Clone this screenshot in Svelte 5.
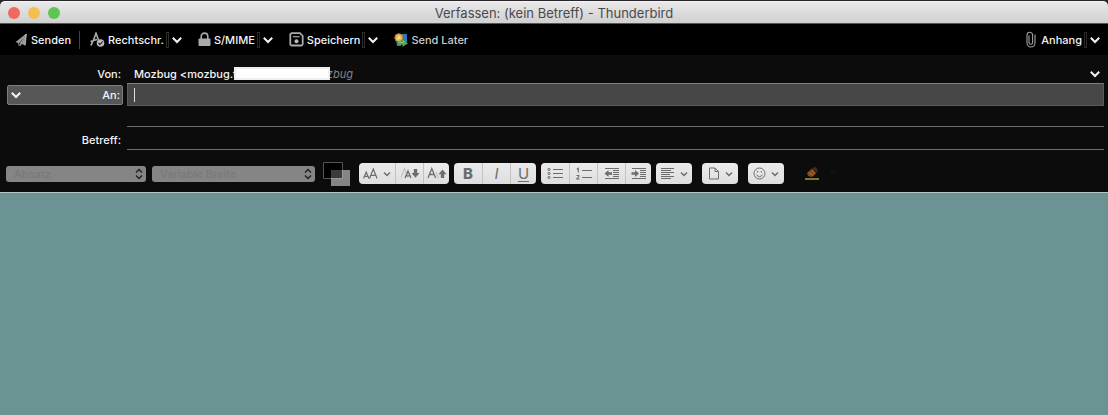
<!--
  Compose window: title bar, main toolbar, address rows, format bar and body.
-->
<script lang="ts">
	let to = $state('');
	let extra = $state('');
	let subject = $state('');
	let body = $state('');
</script>

{#snippet chevron()}
	<svg class="chevron" width="10" height="8" viewBox="0 0 10 8" aria-hidden="true">
		<path d="M.8 1.8 5 6 9.2 1.8" fill="none" stroke="currentColor" stroke-width="2" />
	</svg>
{/snippet}

{#snippet smallChevron()}
	<svg width="8" height="6" viewBox="0 0 8 6" aria-hidden="true">
		<path d="M1 1.5 4 4.5 7 1.5" fill="none" stroke="currentColor" stroke-width="1.5" />
	</svg>
{/snippet}

{#snippet drop(label: string)}
	<button type="button" class="drop" aria-label={label}>
		<span class="notch"></span>{@render chevron()}
	</button>
{/snippet}

{#snippet updown()}
	<svg class="updown" width="8" height="12" viewBox="0 0 8 12" aria-hidden="true">
		<path d="M1 4.5 4 1.5 7 4.5M1 7.5 4 10.5 7 7.5" fill="none" stroke="#222" stroke-width="1.5" />
	</svg>
{/snippet}

<div class="window">
	<header class="titlebar">
		<div class="lights">
			<button type="button" class="light close" aria-label="Schließen"></button>
			<button type="button" class="light minimize" aria-label="Minimieren"></button>
			<button type="button" class="light zoom" aria-label="Zoomen"></button>
		</div>
		<h1>Verfassen: (kein Betreff) - Thunderbird</h1>
	</header>

	<div class="toolbar" role="toolbar" aria-label="Verfassen">
		<button type="button" class="tool">
			<svg width="12" height="14" viewBox="0 0 12 14" aria-hidden="true">
				<path d="M11.5.5.5 9l3 1.3zM11.5.5 5 10v3.5l1.8-2.4 3.4 1.4z" fill="#999" />
				<path d="M11 1 3.7 10.1 4.2 13M11.3 1 10.2 12.3" fill="none" stroke="#bbb" stroke-width=".9" />
			</svg>
			Senden
		</button>
		<span class="divider"></span>
		<div class="split">
			<button type="button" class="tool">
				<svg width="15" height="15" viewBox="0 0 15 15" aria-hidden="true">
					<path d="M.8 13.5Q4 8 6 1.2L8.5 8M.5 9.5 7 7.5" fill="none" stroke="#aaa" stroke-width="1.6" />
					<circle cx="10.5" cy="11" r="3.8" fill="#bbb" />
					<path d="M8.5 11 10 12.5 12.7 9.5" fill="none" stroke="#111" stroke-width="1.1" />
				</svg>
				Rechtschr.
			</button>
			{@render drop('Rechtschreibung wählen')}
		</div>
		<div class="split">
			<button type="button" class="tool">
				<svg width="13" height="15" viewBox="0 0 13 15" aria-hidden="true">
					<path d="M3.2 7V4.4a3.3 3.3 0 0 1 6.6 0V7" fill="none" stroke="#aaa" stroke-width="1.6" />
					<rect x=".5" y="6.5" width="12" height="7.5" rx="1" fill="#aaa" />
				</svg>
				S/MIME
			</button>
			{@render drop('S/MIME-Optionen')}
		</div>
		<div class="split">
			<button type="button" class="tool">
				<svg width="15" height="15" viewBox="0 0 15 15" aria-hidden="true">
					<path d="M2.5 1.2H11L13.7 4v8a1.5 1.5 0 0 1-1.5 1.5H2.8A1.5 1.5 0 0 1 1.3 12V2.4z" fill="none" stroke="#aaa" stroke-width="1.8" />
					<path d="M4 4.7h6.5" stroke="#aaa" stroke-width="1.2" />
					<circle cx="7.5" cy="9.3" r="2" fill="#bbb" />
				</svg>
				Speichern
			</button>
			{@render drop('Speichern als')}
		</div>
		<button type="button" class="tool later">
			<svg width="14" height="14" viewBox="0 0 14 14" aria-hidden="true">
				<path d="M5 1h8v8H5z" fill="#2f79bd" />
				<path d="M2 6h5v7H3z" fill="#317ec4" />
				<circle cx="4.8" cy="4.7" r="4" fill="#e2b84e" stroke="#ad792d" />
				<path d="M5 2.5v2.6l-2 1M5 5h1.5" fill="none" stroke="#fff2bb" stroke-width="1" />
				<path d="M4 9h4.5V6.5L14 10.2 8.5 14v-2.2H4z" fill="#4da849" />
				<path d="M5 9.6h4.2V8l2 1.6" fill="none" stroke="#a4d58b" stroke-width=".7" />
			</svg>
			Send Later
		</button>
		<div class="split attach">
			<button type="button" class="tool">
				<svg width="10" height="17" viewBox="0 0 10 17" aria-hidden="true">
					<path d="M3 4.5v7a1.8 1.8 0 0 0 3.6 0V4a2.8 2.8 0 0 0-5.6 0v8a4 4 0 0 0 8 0V3.5" fill="none" stroke="#a0a0a0" stroke-width="1.1" />
				</svg>
				Anhang
			</button>
			{@render drop('Anhang wählen')}
		</div>
	</div>

	<div class="headers">
		<span class="name" id="from-label">Von:</span>
		<button type="button" class="from" aria-labelledby="from-label from-value">
			<span id="from-value">Mozbug &lt;mozbug.t</span><span class="hidden-part"></span><i>zbug</i>
			{@render chevron()}
		</button>

		<button type="button" class="kind">{@render chevron()}<span>An:</span></button>
		<div class="to">
			<span class="caret"></span>
			<input class="field" aria-label="An" bind:value={to} />
		</div>

		<span></span>
		<input class="field line" aria-label="Weiterer Empfänger" bind:value={extra} />

		<label class="name subject" for="subject">Betreff:</label>
		<input id="subject" class="field line" bind:value={subject} />
	</div>

	<div class="format" role="toolbar" aria-label="Formatierung">
		<div class="picker paragraph">
			<select aria-label="Absatzformat" disabled><option>Absatz</option></select>
			{@render updown()}
		</div>
		<div class="picker font">
			<select aria-label="Schriftart" disabled><option>Variable Breite</option></select>
			{@render updown()}
		</div>
		<button type="button" class="colors" aria-label="Textfarbe">
			<svg width="28" height="26" viewBox="0 0 28 26" aria-hidden="true">
				<path d="M8 9h19v16H8z" fill="#858585" />
				<path d="M.5 1.5h19v16H.5z" fill="#000" stroke="#555" />
				<path d="M8 9h11v8H8z" fill="#3b3b3b" />
				<path d="M8 17.5h11.5V9" fill="none" stroke="#999" />
			</svg>
		</button>

		<div class="group">
			<button type="button" class="wide" aria-label="Schriftgröße">
				<svg width="15" height="12" viewBox="0 0 15 12" aria-hidden="true">
					<path d="M.5 10.5 3.2 4l2.7 6.5M1.4 8.4H5M6.5 10.5 10.3 1l3.8 9.5M7.8 7.3h5" fill="none" stroke="currentColor" stroke-width="1.2" />
				</svg>
				{@render smallChevron()}
			</button>
			<button type="button" aria-label="Schrift verkleinern">
				<svg width="20" height="13" viewBox="0 0 20 13" aria-hidden="true">
					<path d="M1 10.5 4.5 1.5 8 10.5" fill="none" stroke="#c3c3c3" stroke-width="1.2" />
					<path d="M5 11 8 4l3 7M6 8.8h4" fill="none" stroke="currentColor" stroke-width="1.3" />
					<path d="M13.8 2h3.4v4h2.3l-4 4.8L11.5 6h2.3z" fill="currentColor" />
				</svg>
			</button>
			<button type="button" aria-label="Schrift vergrößern">
				<svg width="20" height="13" viewBox="0 0 20 13" aria-hidden="true">
					<path d="M9 5 11.5 11" fill="none" stroke="#c3c3c3" stroke-width="1.2" />
					<path d="M1 11 4.8 1.5 8.6 11M2.3 7.5h5" fill="none" stroke="currentColor" stroke-width="1.3" />
					<path d="M13.8 11V7.3h-2.3l4-4.8 4 4.8h-2.3V11z" fill="currentColor" />
				</svg>
			</button>
		</div>

		<div class="group">
			<button type="button" aria-label="Fett"><b>B</b></button>
			<button type="button" aria-label="Kursiv"><i>I</i></button>
			<button type="button" aria-label="Unterstrichen"><u>U</u></button>
		</div>

		<div class="group">
			<button type="button" aria-label="Aufzählung">
				<svg width="16" height="13" viewBox="0 0 16 13" aria-hidden="true">
					<g fill="none" stroke="currentColor">
						<circle cx="2" cy="2.5" r="1.1" /><circle cx="2" cy="6.5" r="1.1" /><circle cx="2" cy="10.5" r="1.1" />
						<path d="M6 2.5h10M6 6.5h10M6 10.5h10" />
					</g>
				</svg>
			</button>
			<button type="button" aria-label="Nummerierung">
				<svg width="16" height="13" viewBox="0 0 16 13" aria-hidden="true">
					<path d="M.8 2.3 2.3 1.3V5.5M.5 8.5h2.3v1.3L.8 12h2.8M6 3.5h10M6 10.5h10" fill="none" stroke="currentColor" stroke-width="1.1" />
				</svg>
			</button>
			<button type="button" aria-label="Einzug verringern">
				<svg width="16" height="13" viewBox="0 0 16 13" aria-hidden="true">
					<path d="M1 1.5h14M9 3.5h6M9 5.5h6M9 7.5h6M9 9.5h6M1 11.5h14" stroke="currentColor" />
					<path d="M.5 6.5 4.5 3v2.3H8v2.4H4.5V10z" fill="currentColor" />
				</svg>
			</button>
			<button type="button" aria-label="Einzug vergrößern">
				<svg width="16" height="13" viewBox="0 0 16 13" aria-hidden="true">
					<path d="M1 1.5h14M9 3.5h6M9 5.5h6M9 7.5h6M9 9.5h6M1 11.5h14" stroke="currentColor" />
					<path d="M8 6.5 4 3v2.3H.5v2.4H4V10z" fill="currentColor" />
				</svg>
			</button>
		</div>

		<div class="group">
			<button type="button" class="wide" aria-label="Ausrichtung">
				<svg width="14" height="13" viewBox="0 0 14 13" aria-hidden="true">
					<path d="M0 1.5h13M0 3.5h10M0 5.5h13M0 7.5h9M0 9.5h13M0 11.5h10" stroke="currentColor" />
				</svg>
				{@render smallChevron()}
			</button>
		</div>

		<div class="group apart">
			<button type="button" class="wide" aria-label="Einfügen">
				<svg width="12" height="13" viewBox="0 0 12 13" aria-hidden="true">
					<path d="M1.5 1H7l3.5 3.5V12h-9zM7 1v3.5h3.5" fill="none" stroke="currentColor" />
				</svg>
				{@render smallChevron()}
			</button>
		</div>

		<div class="group apart">
			<button type="button" class="wide" aria-label="Smiley">
				<svg width="13" height="13" viewBox="0 0 13 13" aria-hidden="true">
					<circle cx="6.5" cy="6.5" r="5.5" fill="none" stroke="currentColor" />
					<path d="M3.7 7.7a3 3 0 0 0 5.6 0" fill="none" stroke="currentColor" />
					<circle cx="4.6" cy="4.7" r=".8" fill="currentColor" /><circle cx="8.4" cy="4.7" r=".8" fill="currentColor" />
				</svg>
				{@render smallChevron()}
			</button>
		</div>

		<button type="button" class="marker" aria-label="Hervorheben" disabled>
			<svg width="32" height="16" viewBox="0 0 32 16" aria-hidden="true">
				<path d="M8 2 12 1 14 4.5 12 7z" fill="#4b2815" />
				<path d="M3 7 8 2.5 12 7.5 8 11 4 10z" fill="#85471d" />
				<path d="M4.5 6.5 9.5 9.5M8 4l3 4" stroke="#b0762d" stroke-width=".8" />
				<path d="M1 12h14v2H1z" fill="#81752f" />
				<path d="m26 5 2.5 2.5L31 5" fill="none" stroke="#191919" />
			</svg>
		</button>
	</div>

	<textarea class="body" aria-label="Nachricht" bind:value={body}></textarea>
</div>

<style>
	:global(body) {
		background: #29262b;
	}
	.window {
		display: flex;
		flex-direction: column;
		box-sizing: border-box;
		min-height: 100vh;
		padding-top: 1px;
		color: #f4f4f4;
		font: 500 11px/14px Inter, 'Liberation Sans', sans-serif;
	}
	button,
	input,
	select,
	textarea {
		box-sizing: border-box;
		margin: 0;
		padding: 0;
		border: 0;
		background: none;
		color: inherit;
		font: inherit;
	}
	svg {
		display: block;
		flex-shrink: 0;
	}

	.titlebar {
		position: relative;
		display: flex;
		align-items: center;
		justify-content: center;
		box-sizing: border-box;
		height: 23px;
		border-top: 1px solid #f4f4f4;
		border-bottom: 1px solid #555;
		border-radius: 5px 5px 0 0;
		background: linear-gradient(#e8e8e8, #d0d0d0);
	}
	h1 {
		margin: 0;
		color: #4a4a4a;
		font-size: 13px;
		font-weight: 400;
		line-height: 16px;
	}
	.lights {
		position: absolute;
		left: 8px;
		display: flex;
		gap: 8px;
	}
	.light {
		width: 12px;
		height: 12px;
		border-radius: 50%;
	}
	.close {
		background: #ee695e;
	}
	.minimize {
		background: #f5bf4f;
	}
	.zoom {
		background: #5fc654;
	}

	.toolbar {
		display: flex;
		align-items: center;
		box-sizing: border-box;
		height: 31px;
		padding: 0 8px 0 15px;
		background: #000;
	}
	.tool,
	.drop,
	.split {
		display: flex;
		align-items: center;
	}
	.tool {
		gap: 4px;
	}
	.later {
		gap: 3px;
		color: #ccc;
	}
	.split {
		gap: 2px;
		margin-right: 16px;
	}
	.split .tool {
		gap: 3px;
	}
	.attach {
		margin: 0 0 0 auto;
	}
	.attach .tool {
		gap: 5px;
	}
	.drop {
		gap: 3px;
	}
	.notch {
		box-sizing: border-box;
		width: 3px;
		height: 16px;
		border: 1px solid #2c2c2c;
	}
	.divider {
		width: 1px;
		height: 18px;
		margin: 0 10px 0 8px;
		background: #444;
	}

	.headers {
		display: grid;
		grid-template-columns: 116px 1fr;
		grid-template-rows: 19px 23px 21px 23px;
		column-gap: 4px;
		align-items: center;
		padding: 9px 4px 0 7px;
		background: #0c0c0c;
	}
	.name {
		padding-right: 2px;
		text-align: right;
	}
	.subject {
		padding-top: 3px;
	}
	.from {
		display: flex;
		align-items: center;
		padding: 0 4px 0 7px;
	}
	.from i {
		color: #858585;
		font-weight: 400;
	}
	.from .chevron {
		margin-left: auto;
	}
	.hidden-part {
		z-index: 1;
		box-sizing: border-box;
		width: 96px;
		height: 13px;
		margin: 0 -3px;
		border: 2px solid #eee;
		background: #fff;
	}
	.kind {
		display: flex;
		align-items: center;
		justify-content: space-between;
		height: 20px;
		padding: 0 2px 0 3px;
		border: 1px solid #7b7f7d;
		border-radius: 2px;
		background: #575757;
	}
	.to {
		display: flex;
		align-items: center;
		align-self: stretch;
		padding-left: 6px;
		border: 1px solid #5a5a5a;
		border-top-color: #7d817f;
		background: #474748;
	}
	.caret {
		width: 1px;
		height: 14px;
		background: #ddd;
	}
	.field {
		align-self: stretch;
		width: 100%;
		min-width: 0;
		outline: none;
	}
	.line {
		padding-left: 7px;
		border-bottom: 1px solid #6d6d6d;
	}

	.format {
		display: flex;
		align-items: center;
		height: 43px;
		box-sizing: border-box;
		padding: 5px 6px 0;
		border-bottom: 1px solid #b5c6c5;
		background: #0c0c0c;
	}
	.picker {
		position: relative;
		height: 16px;
		margin-right: 6px;
	}
	.picker select {
		width: 100%;
		height: 16px;
		padding-left: 8px;
		border-radius: 3px;
		background: #858585;
		color: #797979;
		appearance: none;
		opacity: 1;
	}
	.updown {
		position: absolute;
		top: 2px;
		right: 3px;
	}
	.paragraph {
		width: 140px;
	}
	.font {
		width: 163px;
	}
	.colors {
		margin: 0 8px 0 2px;
	}
	.group {
		display: flex;
		height: 21px;
		margin-right: 5px;
		overflow: hidden;
		border-radius: 4px;
		background: linear-gradient(#ebebeb, #dedede);
		color: #6d6d6d;
	}
	.group button {
		display: flex;
		align-items: center;
		justify-content: center;
		width: 28px;
		font-size: 15px;
		line-height: 21px;
	}
	.group button + button {
		border-left: 1px solid #c2c2c2;
	}
	.group button:last-child:not(.wide) {
		width: 26px;
	}
	.group .wide {
		gap: 5px;
		width: 36px;
	}
	.group b {
		font-weight: 800;
	}
	.group i,
	.group u {
		font-weight: 400;
	}
	.group u {
		text-decoration-thickness: 1px;
		text-underline-offset: 2px;
	}
	.group.apart {
		margin: 0 5px;
	}
	.marker {
		margin-left: 15px;
	}

	.body {
		flex: 1;
		padding: 8px;
		outline: none;
		background: #6b9393;
		resize: none;
	}
</style>
